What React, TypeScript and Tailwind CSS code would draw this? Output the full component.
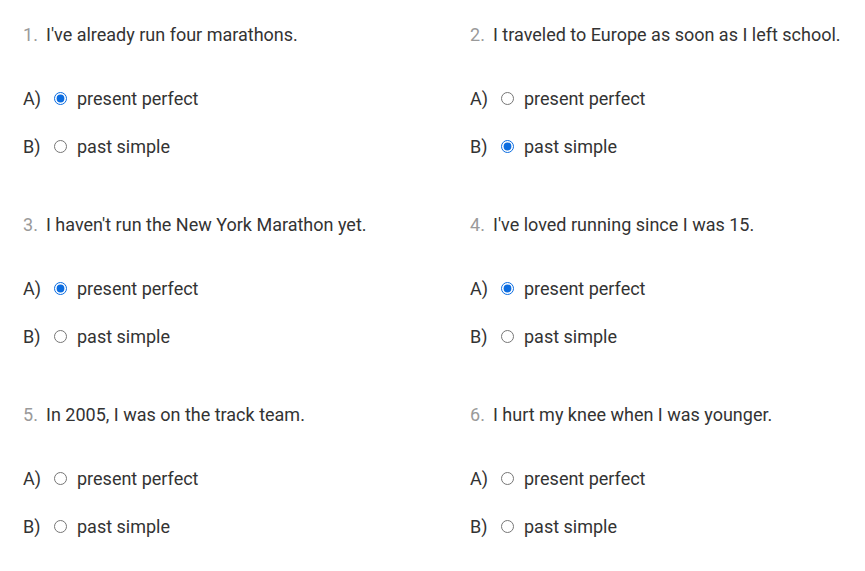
const questions = [
  { n: 1, text: "I've already run four marathons.", answer: "A" },
  { n: 2, text: "I traveled to Europe as soon as I left school.", answer: "B" },
  { n: 3, text: "I haven't run the New York Marathon yet.", answer: "A" },
  { n: 4, text: "I've loved running since I was 15.", answer: "A" },
  { n: 5, text: "In 2005, I was on the track team.", answer: null },
  { n: 6, text: "I hurt my knee when I was younger.", answer: null },
];

const options = [
  { key: "A", label: "present perfect" },
  { key: "B", label: "past simple" },
];

function Question({ n, text, answer }: { n: number; text: string; answer: string | null }) {
  return (
    <div className="pb-[54px]">
      <div className="flex h-6 items-center">
        <span className="w-[23px] text-[#9a9a9a]">{n}.</span>
        <span>{text}</span>
      </div>
      <div className="mt-10 flex flex-col gap-6">
        {options.map((o) => (
          <label key={o.key} className="flex h-6 items-center">
            <span className="w-[31px]">{o.key})</span>
            <input
              type="radio"
              name={`q${n}`}
              defaultChecked={answer === o.key}
              className="m-0 h-[13px] w-[13px] accent-[#0b6ce0]"
            />
            <span className="ml-[10px]">{o.label}</span>
          </label>
        ))}
      </div>
    </div>
  );
}

export default function App() {
  return (
    <div
      className="grid min-h-[571px] grid-cols-[447px_1fr] bg-white pl-[23px] pt-[22px] text-[18px] text-[#333]"
      style={{ fontFamily: "Roboto, 'Liberation Sans', sans-serif" }}
    >
      {questions.map((q) => (
        <Question key={q.n} {...q} />
      ))}
    </div>
  );
}
